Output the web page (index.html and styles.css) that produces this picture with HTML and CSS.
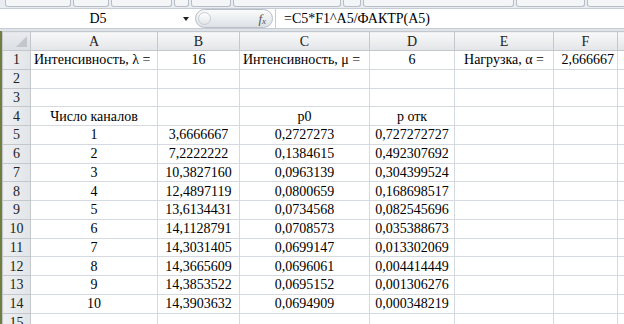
FILE: index.html
```html
<html>
  <head>
    <link rel="stylesheet" href="styles.css">
  </head>
  <body>
    <div class="window">
      <div class="ribbon-edge">
        <span class="rb w66"></span>
        <span class="rb w36"></span>
        <span class="rb w61"></span>
        <span class="rb w15"></span>
        <span class="rb w40"></span>
        <span class="rb w108"></span>
        <span class="rb w18"></span>
        <span class="rb w151"></span>
        <span class="rb w69"></span>
        <span class="rb w40"></span>
      </div>

      <div class="formula-bar">
        <div class="name-box">
          <span class="cell-ref">D5</span>
          <span class="drop-arrow"></span>
        </div>
        <div class="fx-pill">
          <span class="grip"></span>
          <span class="fx">f<sub>x</sub></span>
        </div>
        <div class="formula">=C5*F1^A5/ФАКТР(A5)</div>
      </div>

      <div class="sheet-wrap">
        <table class="sheet">
          <colgroup>
            <col class="c-head">
            <col class="c-a">
            <col class="c-b">
            <col class="c-c">
            <col class="c-d">
            <col class="c-e">
            <col class="c-f">
            <col class="c-g">
          </colgroup>
          <thead>
            <tr>
              <th class="corner"><span class="tri"></span></th>
              <th>A</th>
              <th>B</th>
              <th>C</th>
              <th>D</th>
              <th>E</th>
              <th>F</th>
              <th></th>
            </tr>
          </thead>
          <tbody id="sheetBody">
            <tr>
              <th>1</th>
              <td class="left">Интенсивность, λ =</td>
              <td>16</td>
              <td class="left">Интенсивность, μ =</td>
              <td>6</td>
              <td>Нагрузка, α =</td>
              <td class="right">2,666667</td>
              <td></td>
            </tr>
            <tr>
              <th>2</th>
              <td></td><td></td><td></td><td></td><td></td><td></td><td></td>
            </tr>
            <tr>
              <th>3</th>
              <td></td><td></td><td></td><td></td><td></td><td></td><td></td>
            </tr>
            <tr>
              <th>4</th>
              <td>Число каналов</td>
              <td></td>
              <td>p0</td>
              <td>p отк</td>
              <td></td><td></td><td></td>
            </tr>
            <!-- rows 5..14 are filled in by the script below -->
          </tbody>
        </table>
      </div>
    </div>

    <script>
      // Results for n = 1..10 channels
      const results = [
        ["3,6666667", "0,2727273", "0,727272727"],
        ["7,2222222", "0,1384615", "0,492307692"],
        ["10,3827160", "0,0963139", "0,304399524"],
        ["12,4897119", "0,0800659", "0,168698517"],
        ["13,6134431", "0,0734568", "0,082545696"],
        ["14,1128791", "0,0708573", "0,035388673"],
        ["14,3031405", "0,0699147", "0,013302069"],
        ["14,3665609", "0,0696061", "0,004414449"],
        ["14,3853522", "0,0695152", "0,001306276"],
        ["14,3903632", "0,0694909", "0,000348219"],
      ];

      const body = document.getElementById("sheetBody");

      results.forEach((r, i) => {
        const row = document.createElement("tr");
        row.innerHTML = `
          <th>${i + 5}</th>
          <td>${i + 1}</td>
          <td>${r[0]}</td>
          <td>${r[1]}</td>
          <td>${r[2]}</td>
          <td></td><td></td><td></td>
        `;
        body.appendChild(row);
      });

      // partly visible last row
      const last = document.createElement("tr");
      last.innerHTML = `<th>15</th><td></td><td></td><td></td><td></td><td></td><td></td><td></td>`;
      body.appendChild(last);
    </script>
  </body>
</html>
```

FILE: styles.css
```css
body {
  margin: 0;
  background-color: #dfe4ea;
  font-family: "Liberation Serif", "Times New Roman", serif;
  color: #000;
}
.window {
  width: 624px;
  height: 324px;
  overflow: hidden;
  background-color: #dfe4ea;
}

/* bottom edge of the ribbon buttons */
.ribbon-edge {
  height: 8px;
  display: flex;
  gap: 2px;
  padding-left: 5px;
  background-color: #e9ecf0;
}
.rb {
  height: 6px;
  flex: none;
  border: 1px solid #b8bec7;
  border-top: none;
  border-radius: 0 0 3px 3px;
  background-color: #f4f5f7;
}
.w66 { width: 64px; }
.w36 { width: 34px; }
.w61 { width: 59px; }
.w15 { width: 13px; }
.w40 { width: 38px; }
.w108 { width: 106px; }
.w18 { width: 16px; }
.w151 { width: 149px; }
.w69 { width: 67px; }

/* formula bar */
.formula-bar {
  height: 21px;
  display: flex;
  align-items: stretch;
  padding-left: 5px;
  margin-bottom: 2px;
  background-color: #fff;
  border-top: 1px solid #c6ccd4;
  border-bottom: 1px solid #c6ccd4;
  box-sizing: border-box;
}
.name-box {
  width: 186px;
  display: flex;
  align-items: center;
  font-size: 14px;
}
.cell-ref {
  flex: 1;
  text-align: center;
  padding-left: 8px;
}
.drop-arrow {
  width: 0;
  height: 0;
  border-left: 3px solid transparent;
  border-right: 3px solid transparent;
  border-top: 4px solid #222;
  margin-right: 2px;
}
.fx-pill {
  width: 78px;
  margin: 0 2px 0 4px;
  display: flex;
  align-items: center;
  justify-content: space-between;
  border: 1px solid #b9bec6;
  border-radius: 10px;
  background: linear-gradient(#fafbfc, #dde1e6);
  box-sizing: border-box;
}
.grip {
  width: 13px;
  height: 13px;
  margin-left: 2px;
  border-radius: 50%;
  border: 1px solid #c8ccd2;
  background: linear-gradient(#ffffff, #e2e5e9);
  box-sizing: border-box;
}
.fx {
  font-style: italic;
  font-size: 13px;
  color: #555;
  margin-right: 6px;
}
.fx sub {
  font-size: 9px;
  vertical-align: -1px;
}
.formula {
  flex: 1;
  display: flex;
  align-items: center;
  padding-left: 8px;
  font-size: 14px;
  border-left: 1px solid #c6ccd4;
}

/* grid */
.sheet-wrap {
  padding-left: 2px;
  background: linear-gradient(90deg, #6f7d3e, #93a05a);
}
.sheet {
  border-collapse: collapse;
  table-layout: fixed;
  width: 628px;
  background-color: #fff;
  font-size: 14px;
}
.c-head { width: 28px; }
.c-a { width: 127px; }
.c-b { width: 82px; }
.c-c { width: 130px; }
.c-d { width: 85px; }
.c-e { width: 99px; }
.c-f { width: 64px; }
.c-g { width: 40px; }

th,
td {
  height: 18.75px;
  padding: 0 3px;
  white-space: nowrap;
  overflow: hidden;
  line-height: 17px;
  text-align: center;
  box-sizing: border-box;
}
td {
  border: 1px solid #d4d9e2;
}
thead th {
  height: 19px;
  font-weight: normal;
  color: #222;
  background: linear-gradient(#f8f8f9, #e3e5e8);
  border: 1px solid #c4c8cd;
}
tbody th {
  font-weight: normal;
  color: #222;
  background: linear-gradient(90deg, #eef0f2, #e2e5e8);
  border: 1px solid #c4c8cd;
  padding: 0;
}
.corner {
  position: relative;
  background: linear-gradient(#e9ebee, #dcdfe3);
}
.tri {
  position: absolute;
  right: 3px;
  bottom: 3px;
  width: 0;
  height: 0;
  border-left: 11px solid transparent;
  border-bottom: 11px solid #c3c7cc;
}
.left {
  text-align: left;
}
.right {
  text-align: right;
}
```
